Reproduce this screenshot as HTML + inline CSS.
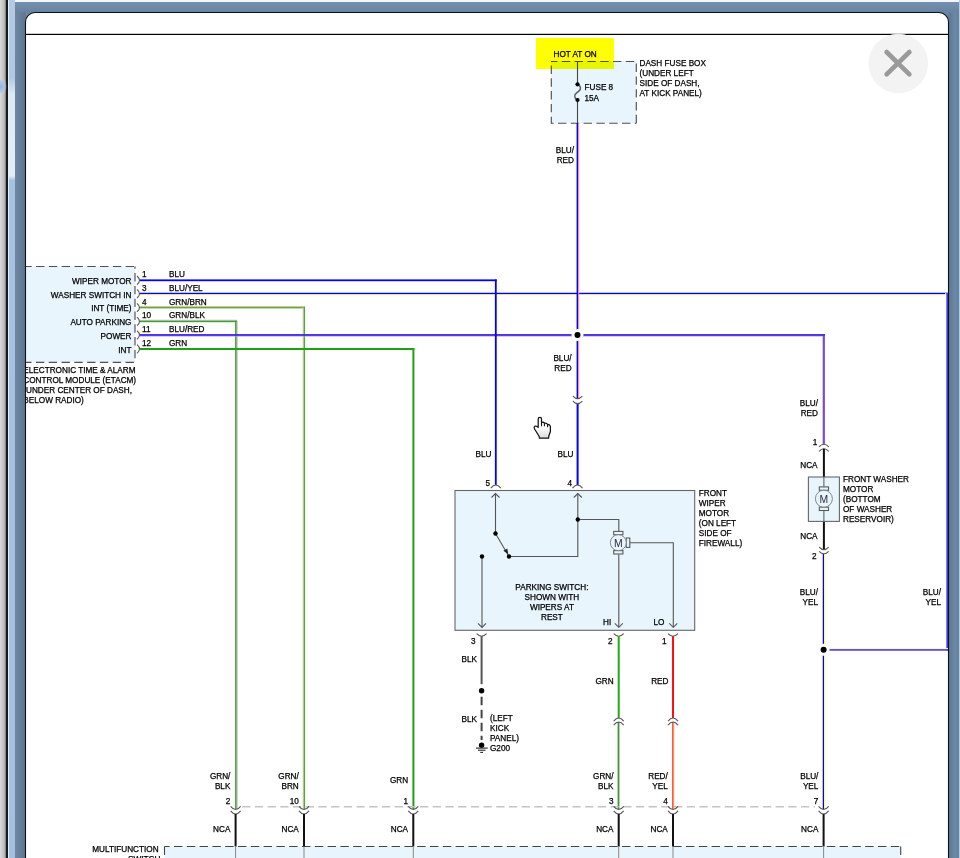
<!DOCTYPE html>
<html><head><meta charset="utf-8">
<style>
html,body{margin:0;padding:0;width:960px;height:858px;overflow:hidden;background:#fff}
svg{position:absolute;left:0;top:0;display:block}
text{font-family:"Liberation Sans",sans-serif;font-size:8.2px;fill:#000;stroke:#000;stroke-width:0.25px}
.e{text-anchor:end}
.m{text-anchor:middle}
</style></head><body>
<svg width="960" height="858" viewBox="0 0 960 858">
<defs>
<linearGradient id="lg" x1="0" x2="1" y1="0" y2="0">
<stop offset="0" stop-color="#dadadc"/><stop offset="0.55" stop-color="#c6c4c2"/><stop offset="0.85" stop-color="#a8a8a8"/><stop offset="1" stop-color="#6a6a6a"/>
</linearGradient>
<linearGradient id="lb" x1="0" x2="0" y1="0" y2="1">
<stop offset="0" stop-color="#b4cae2"/><stop offset="0.09" stop-color="#b0c8e0"/><stop offset="0.11" stop-color="#dfe9f3"/><stop offset="0.205" stop-color="#e4edf5"/><stop offset="0.21" stop-color="#a6c2de"/><stop offset="1" stop-color="#a4c0dc"/>
</linearGradient>
<radialGradient id="glow"><stop offset="0" stop-color="#8fb2e2"/><stop offset="0.6" stop-color="#a8c4e4" stop-opacity="0.7"/><stop offset="1" stop-color="#c8e0e0" stop-opacity="0"/></radialGradient>
<linearGradient id="sl" x1="0" x2="1" y1="0" y2="0"><stop offset="0" stop-color="#6d88a2"/><stop offset="1" stop-color="#5e7591"/></linearGradient>
<linearGradient id="sr" x1="0" x2="1" y1="0" y2="0"><stop offset="0" stop-color="#5e7591"/><stop offset="0.6" stop-color="#6c88a4"/><stop offset="1" stop-color="#6280a0"/></linearGradient>
<linearGradient id="st" x1="0" x2="0" y1="0" y2="1"><stop offset="0" stop-color="#7490b0"/><stop offset="1" stop-color="#6883a0"/></linearGradient>
</defs>

<rect x="551" y="61" width="85" height="62" fill="#e8f5fd"/>
<line x1="551" y1="61.5" x2="636.3" y2="61.5" stroke="#505050" stroke-width="1.15" stroke-dasharray="8.4 4.4" stroke-dashoffset="2.0"/>
<line x1="551" y1="123.2" x2="636.3" y2="123.2" stroke="#505050" stroke-width="1.15" stroke-dasharray="8.4 4.4" stroke-dashoffset="5.8"/>
<line x1="551.3" y1="61" x2="551.3" y2="123.2" stroke="#505050" stroke-width="1.15" stroke-dasharray="8.4 4.4" stroke-dashoffset="8.3"/>
<line x1="636.3" y1="61" x2="636.3" y2="123.2" stroke="#505050" stroke-width="1.15" stroke-dasharray="8.4 4.4" stroke-dashoffset="10.2"/>
<rect x="576.95" y="61" width="1.1" height="23.299999999999997" fill="#444"/>
<rect x="576.95" y="100" width="1.1" height="23" fill="#444"/>
<path d="M577.5 84.5 C580.8 85.5 581.6 89.2 578.8 91.2 L576.3 93.2 C573.8 95.2 574.3 98.6 577.5 100" fill="none" stroke="#5e5e5e" stroke-width="1.5"/>
<circle cx="577.5" cy="84.3" r="2.1" fill="#000"/>
<circle cx="577.5" cy="100" r="2.1" fill="#000"/>
<text x="584.5" y="90">FUSE 8</text>
<text x="584.5" y="101">15A</text>
<text x="639.5" y="66">DASH FUSE BOX</text>
<text x="639.5" y="76">(UNDER LEFT</text>
<text x="639.5" y="86">SIDE OF DASH,</text>
<text x="639.5" y="96">AT KICK PANEL)</text>
<rect x="536" y="38" width="78" height="31" fill="#ffff00" style="mix-blend-mode:multiply"/>
<text x="553.5" y="57">HOT AT ON</text>
<rect x="10" y="266.7" width="125" height="95.3" fill="#e8f5fd"/>
<line x1="10" y1="266.5" x2="135.3" y2="266.5" stroke="#505050" stroke-width="1.15" stroke-dasharray="8.4 4.4" stroke-dashoffset="12.3"/>
<line x1="10" y1="362.3" x2="135.3" y2="362.3" stroke="#505050" stroke-width="1.15" stroke-dasharray="8.4 4.4" stroke-dashoffset="12.5"/>
<line x1="135" y1="266.5" x2="135" y2="362.3" stroke="#505050" stroke-width="1.15" stroke-dasharray="8.4 4.4" stroke-dashoffset="6.2"/>
<text x="131.5" y="284.1" class="e">WIPER MOTOR</text>
<text x="142" y="276.6">1</text>
<text x="169" y="276.6">BLU</text>
<path d="M137 276.0 Q142 280.3 137 284.6" fill="none" stroke="#555" stroke-width="1.1"/>
<text x="131.5" y="297.5" class="e">WASHER SWITCH IN</text>
<text x="142" y="290.5">3</text>
<text x="169" y="290.5">BLU/YEL</text>
<path d="M137 289.4 Q142 293.7 137 298.0" fill="none" stroke="#555" stroke-width="1.1"/>
<text x="131.5" y="311.4" class="e">INT (TIME)</text>
<text x="142" y="304.6">4</text>
<text x="169" y="304.6">GRN/BRN</text>
<path d="M137 303.3 Q142 307.6 137 311.90000000000003" fill="none" stroke="#555" stroke-width="1.1"/>
<text x="131.5" y="325.2" class="e">AUTO PARKING</text>
<text x="142" y="318.3">10</text>
<text x="169" y="318.3">GRN/BLK</text>
<path d="M137 317.09999999999997 Q142 321.4 137 325.7" fill="none" stroke="#555" stroke-width="1.1"/>
<text x="131.5" y="338.8" class="e">POWER</text>
<text x="142" y="332.1">11</text>
<text x="169" y="332.1">BLU/RED</text>
<path d="M137 330.7 Q142 335.0 137 339.3" fill="none" stroke="#555" stroke-width="1.1"/>
<text x="131.5" y="352.8" class="e">INT</text>
<text x="142" y="346.0">12</text>
<text x="169" y="346.0">GRN</text>
<path d="M137 344.7 Q142 349.0 137 353.3" fill="none" stroke="#555" stroke-width="1.1"/>
<text x="23.3" y="373">ELECTRONIC TIME &amp; ALARM</text>
<text x="23.3" y="382.8">CONTROL MODULE (ETACM)</text>
<text x="23.3" y="392.7">(UNDER CENTER OF DASH,</text>
<text x="23.3" y="402.6">BELOW RADIO)</text>
<rect x="140" y="306.8" width="165" height="1.6" fill="#5aae3a"/>
<rect x="140" y="306.0" width="165" height="0.8" fill="#d8b898"/>
<rect x="303.34999999999997" y="306.8" width="1.7" height="502.2" fill="#52aa36"/>
<rect x="302.65" y="306.8" width="0.7" height="502.2" fill="#e4d0bc"/>
<rect x="140" y="320.59999999999997" width="96.80000000000001" height="1.6" fill="#38a428"/>
<rect x="140" y="319.79999999999995" width="96.80000000000001" height="0.8" fill="#a8a8a8"/>
<rect x="235.1" y="320.6" width="1.6" height="488.4" fill="#38a428"/>
<rect x="236.70000000000002" y="320.6" width="0.8" height="488.4" fill="#a8a8a8"/>
<rect x="140" y="348.0" width="274.3" height="2" fill="#22a014"/>
<rect x="412.4" y="348" width="2" height="461" fill="#22a014"/>
<rect x="140" y="292.75" width="808" height="1.3" fill="#0000ff"/>
<rect x="140" y="294.04999999999995" width="808" height="1.0" fill="#e4dca0"/>
<rect x="946.2" y="292.8" width="1.8" height="357.99999999999994" fill="#3a3aff"/>
<rect x="945.2" y="292.8" width="1.0" height="357.99999999999994" fill="#fbfbd8"/>
<rect x="823.6" y="649.0" width="124.39999999999998" height="1.8" fill="#5a50f0"/>
<rect x="823.6" y="648.0" width="124.39999999999998" height="1.0" fill="#ffff90"/>
<rect x="822.75" y="553.7" width="1.4" height="255.29999999999995" fill="#0000ff"/>
<rect x="824.1500000000001" y="553.7" width="1.1" height="255.29999999999995" fill="#ffff80"/>
<rect x="140" y="334.1" width="684.8" height="1.8" fill="#3a1ee4"/>
<rect x="140" y="335.9" width="684.8" height="0.6" fill="#c090d0"/>
<rect x="822.9" y="336.5" width="2.0" height="107.80000000000001" fill="#6a4ee8"/>
<rect x="822.1" y="336.5" width="0.8" height="107.80000000000001" fill="#eeb4bc"/>
<rect x="822.9" y="334.1" width="2.0" height="2.5" fill="#4a2ee6"/>
<rect x="140" y="279.40000000000003" width="356.7" height="1.8" fill="#0000ff"/>
<rect x="494.90000000000003" y="279.4" width="1.8" height="205.60000000000002" fill="#0000ff"/>
<rect x="576.6" y="123" width="1.6" height="275.7" fill="#0000ff"/>
<rect x="578.1999999999999" y="123" width="1.0" height="275.7" fill="#ff9080"/>
<rect x="576.6" y="403.6" width="2.0" height="81.39999999999998" fill="#0000ff"/>
<circle cx="577.5" cy="335" r="6" fill="#fff"/>
<circle cx="577.5" cy="335" r="3" fill="#000"/>
<path d="M572.85 396.2 Q577.6 401.2 582.35 396.2" fill="none" stroke="#555" stroke-width="1.1"/>
<path d="M572.85 401.1 Q577.6 406.1 582.35 401.1" fill="none" stroke="#555" stroke-width="1.1"/>
<text x="571.6" y="361" class="e">BLU/</text>
<text x="571.6" y="371" class="e">RED</text>
<text x="574" y="153" class="e">BLU/</text>
<text x="574" y="163" class="e">RED</text>
<text x="491.5" y="456.7" class="e">BLU</text>
<text x="573.5" y="456.7" class="e">BLU</text>
<text x="485.5" y="485.6">5</text>
<text x="567.5" y="485.6">4</text>
<path d="M490.8 488.2 Q495.8 481.8 500.8 488.2" fill="none" stroke="#555" stroke-width="1.1"/>
<path d="M572.5 488.2 Q577.5 481.8 582.5 488.2" fill="none" stroke="#555" stroke-width="1.1"/>
<rect x="455" y="490.5" width="239.7" height="139.8" fill="#e8f5fd" stroke="#666" stroke-width="1.1"/>
<g fill="none" stroke="#555" stroke-width="1.1">
<path d="M495.5 493.5 V533.5"/><path d="M491.5 497.5 L495.5 493.5 L499.5 497.5"/>
<path d="M495.5 533.5 L509 556.5"/>
<path d="M509 556.5 H577.8 V493.5"/><path d="M573.8 497.5 L577.8 493.5 L581.8 497.5"/>
<path d="M577.8 519.5 H618.8 V531.5"/>
<path d="M630 542.8 H673.3 V627.3"/><path d="M669.3 623.3 L673.3 627.3 L677.3 623.3"/>
<path d="M618.8 554.5 V627.3"/><path d="M614.8 623.3 L618.8 627.3 L622.8 623.3"/>
<path d="M482 556.5 V627.4"/><path d="M478 623.4 L482 627.4 L486 623.4"/>
</g>
<path d="M508.3 554.2 L503.4 550.7 L507.3 548.4 Z" fill="#222"/>
<circle cx="495.5" cy="533.5" r="2.2" fill="#000"/>
<circle cx="509" cy="556.5" r="2.2" fill="#000"/>
<circle cx="577.8" cy="519.5" r="2.2" fill="#000"/>
<circle cx="482" cy="556.5" r="2.2" fill="#000"/>
<g fill="#e8f5fd" stroke="#5a5a5a" stroke-width="1.1">
<rect x="613.6999999999999" y="531.4000000000001" width="9.2" height="3.4"/>
<rect x="613.6999999999999" y="550.6" width="9.2" height="3.4"/>
<rect x="626.1999999999999" y="538.0" width="3.6" height="9.4"/>
</g>
<circle cx="618.3" cy="542.7" r="8.0" fill="#e8f5fd" stroke="#7a7a7a" stroke-width="0.9"/>
<text class="m" x="618.3" y="546.6" style="font-size:10.4px;stroke-width:0;fill:#2a2a3a">M</text>
<text x="551.9" y="590.2" class="m">PARKING SWITCH:</text>
<text x="551.9" y="600.2" class="m">SHOWN WITH</text>
<text x="551.9" y="610.2" class="m">WIPERS AT</text>
<text x="551.9" y="620" class="m">REST</text>
<text x="603" y="625">HI</text>
<text x="653.4" y="625">LO</text>
<text x="698.8" y="496">FRONT</text>
<text x="698.8" y="506">WIPER</text>
<text x="698.8" y="516">MOTOR</text>
<text x="698.8" y="526">(ON LEFT</text>
<text x="698.8" y="536">SIDE OF</text>
<text x="698.8" y="546">FIREWALL)</text>
<path d="M476.6 633.6999999999999 Q481.6 638.9 486.6 633.6999999999999" fill="none" stroke="#555" stroke-width="1.1"/>
<path d="M613.7 633.6999999999999 Q618.7 638.9 623.7 633.6999999999999" fill="none" stroke="#555" stroke-width="1.1"/>
<path d="M668.0 633.6999999999999 Q673 638.9 678.0 633.6999999999999" fill="none" stroke="#555" stroke-width="1.1"/>
<text x="471" y="644">3</text>
<text x="608" y="644">2</text>
<text x="662" y="644">1</text>
<rect x="480.6" y="636" width="2" height="48.200000000000045" fill="#555"/>
<circle cx="481.6" cy="690.7" r="2.7" fill="#000"/>
<line x1="481.6" y1="696.8" x2="481.6" y2="740" stroke="#444" stroke-width="2" stroke-dasharray="8.4 4.6"/>
<circle cx="481.6" cy="745.3" r="2.7" fill="#000"/>
<g stroke="#333" stroke-width="1.2"><line x1="476" y1="748.1" x2="487.7" y2="748.1"/><line x1="478" y1="750.2" x2="485.4" y2="750.2"/><line x1="480.3" y1="752.4" x2="483" y2="752.4"/></g>
<text x="461.5" y="662">BLK</text>
<text x="461.5" y="721.7">BLK</text>
<text x="490" y="721">(LEFT</text>
<text x="490" y="731">KICK</text>
<text x="490" y="741">PANEL)</text>
<text x="490" y="751">G200</text>
<rect x="617.7" y="636" width="2" height="82" fill="#22aa14"/>
<rect x="617.6" y="722" width="1.6" height="87" fill="#30a020"/>
<rect x="619.1999999999999" y="722" width="0.8" height="87" fill="#c0b8c8"/>
<rect x="672.0" y="636" width="2" height="82" fill="#ff1010"/>
<rect x="672.0" y="722" width="1.8" height="87" fill="#ff5a3c"/>
<rect x="673.8" y="722" width="0.6" height="87" fill="#ffd890"/>
<path d="M613.7 721.2 Q618.7 714.8 623.7 721.2" fill="none" stroke="#555" stroke-width="1.1"/>
<path d="M613.7 725.2 Q618.7 718.8 623.7 725.2" fill="none" stroke="#555" stroke-width="1.1"/>
<path d="M668.0 721.2 Q673 714.8 678.0 721.2" fill="none" stroke="#555" stroke-width="1.1"/>
<path d="M668.0 725.2 Q673 718.8 678.0 725.2" fill="none" stroke="#555" stroke-width="1.1"/>
<text x="595.5" y="684">GRN</text>
<text x="651.2" y="684">RED</text>
<path d="M819.0 446.8 Q823.9 441.8 828.8 446.8" fill="none" stroke="#555" stroke-width="1.1"/>
<path d="M819.0 451.40000000000003 Q823.9 446.2 828.8 451.40000000000003" fill="none" stroke="#555" stroke-width="1.1"/>
<text x="818" y="406" class="e">BLU/</text>
<text x="818" y="416" class="e">RED</text>
<text x="812.8" y="445">1</text>
<rect x="822.9" y="448.8" width="2" height="100.90000000000003" fill="#111"/>
<text x="817.6" y="468" class="e">NCA</text>
<rect x="808.4" y="477" width="31" height="44.4" fill="#e8f5fd" stroke="#666" stroke-width="1.1"/>
<rect x="823.4" y="477" width="1" height="44.39999999999998" fill="#555"/>
<g fill="#e8f5fd" stroke="#5a5a5a" stroke-width="1.1">
<rect x="819.3" y="486.9" width="9.2" height="3.4"/>
<rect x="819.3" y="507.09999999999997" width="9.2" height="3.4"/>
</g>
<circle cx="823.9" cy="498.7" r="8.5" fill="#e8f5fd" stroke="#7a7a7a" stroke-width="0.9"/>
<text class="m" x="823.9" y="502.59999999999997" style="font-size:10.4px;stroke-width:0;fill:#2a2a3a">M</text>
<text x="843" y="481.5">FRONT WASHER</text>
<text x="843" y="491.5">MOTOR</text>
<text x="843" y="501.5">(BOTTOM</text>
<text x="843" y="511.5">OF WASHER</text>
<text x="843" y="521.5">RESERVOIR)</text>
<text x="817.6" y="539" class="e">NCA</text>
<path d="M819.15 547.1 Q823.9 552.3000000000001 828.65 547.1" fill="none" stroke="#555" stroke-width="1.1"/>
<path d="M819.15 551.3000000000001 Q823.9 556.1 828.65 551.3000000000001" fill="none" stroke="#555" stroke-width="1.1"/>
<text x="812" y="558.8">2</text>
<text x="818" y="594.7" class="e">BLU/</text>
<text x="818" y="604.7" class="e">YEL</text>
<text x="941" y="594.7" class="e">BLU/</text>
<text x="941" y="604.7" class="e">YEL</text>
<circle cx="823.6" cy="649.7" r="6" fill="#fff"/>
<circle cx="823.6" cy="649.7" r="3" fill="#000"/>
<line x1="241" y1="806.8" x2="815" y2="806.8" stroke="#c4c4c4" stroke-width="1.5" stroke-dasharray="8.3 4.4" stroke-dashoffset="-1.2"/>
<rect x="164.5" y="846.5" width="736.2" height="40" fill="#e8f5fd"/>
<line x1="164.5" y1="846.5" x2="901" y2="846.5" stroke="#444" stroke-width="1.1" stroke-dasharray="8.4 4.4" stroke-dashoffset="3.3"/>
<line x1="900.7" y1="846.5" x2="900.7" y2="900" stroke="#444" stroke-width="1.1" stroke-dasharray="8.4 4.4" stroke-dashoffset="0"/>
<line x1="164.5" y1="846.5" x2="164.5" y2="900" stroke="#444" stroke-width="1.1" stroke-dasharray="8.4 4.4" stroke-dashoffset="0"/>
<path d="M230.6 806.3 Q235.6 812.7 240.6 806.3" fill="none" stroke="#555" stroke-width="1.1"/>
<path d="M230.6 810.8 Q235.6 817.2 240.6 810.8" fill="none" stroke="#555" stroke-width="1.1"/>
<rect x="234.6" y="814" width="2" height="32.5" fill="#111"/>
<rect x="235.1" y="846.5" width="1" height="11.5" fill="#888"/>
<text x="230.4" y="778.5" class="e">GRN/</text>
<text x="230.4" y="789" class="e">BLK</text>
<text x="230.4" y="804" class="e">2</text>
<text x="230.4" y="831.6" class="e">NCA</text>
<path d="M299.0 806.3 Q304 812.7 309.0 806.3" fill="none" stroke="#555" stroke-width="1.1"/>
<path d="M299.0 810.8 Q304 817.2 309.0 810.8" fill="none" stroke="#555" stroke-width="1.1"/>
<rect x="303.0" y="814" width="2" height="32.5" fill="#111"/>
<rect x="303.5" y="846.5" width="1" height="11.5" fill="#888"/>
<text x="298.8" y="778.5" class="e">GRN/</text>
<text x="298.8" y="789" class="e">BRN</text>
<text x="298.8" y="804" class="e">10</text>
<text x="298.8" y="831.6" class="e">NCA</text>
<path d="M408.3 806.3 Q413.3 812.7 418.3 806.3" fill="none" stroke="#555" stroke-width="1.1"/>
<path d="M408.3 810.8 Q413.3 817.2 418.3 810.8" fill="none" stroke="#555" stroke-width="1.1"/>
<rect x="412.3" y="814" width="2" height="32.5" fill="#111"/>
<rect x="412.8" y="846.5" width="1" height="11.5" fill="#888"/>
<text x="408.1" y="783" class="e">GRN</text>
<text x="408.1" y="804" class="e">1</text>
<text x="408.1" y="831.6" class="e">NCA</text>
<path d="M613.7 806.3 Q618.7 812.7 623.7 806.3" fill="none" stroke="#555" stroke-width="1.1"/>
<path d="M613.7 810.8 Q618.7 817.2 623.7 810.8" fill="none" stroke="#555" stroke-width="1.1"/>
<rect x="617.7" y="814" width="2" height="32.5" fill="#111"/>
<rect x="618.2" y="846.5" width="1" height="11.5" fill="#888"/>
<text x="613.5" y="778.5" class="e">GRN/</text>
<text x="613.5" y="789" class="e">BLK</text>
<text x="613.5" y="804" class="e">3</text>
<text x="613.5" y="831.6" class="e">NCA</text>
<path d="M668.0 806.3 Q673 812.7 678.0 806.3" fill="none" stroke="#555" stroke-width="1.1"/>
<path d="M668.0 810.8 Q673 817.2 678.0 810.8" fill="none" stroke="#555" stroke-width="1.1"/>
<rect x="672.0" y="814" width="2" height="32.5" fill="#111"/>
<rect x="672.5" y="846.5" width="1" height="11.5" fill="#888"/>
<text x="667.8" y="778.5" class="e">RED/</text>
<text x="667.8" y="789" class="e">YEL</text>
<text x="667.8" y="804" class="e">4</text>
<text x="667.8" y="831.6" class="e">NCA</text>
<path d="M818.6 806.3 Q823.6 812.7 828.6 806.3" fill="none" stroke="#555" stroke-width="1.1"/>
<path d="M818.6 810.8 Q823.6 817.2 828.6 810.8" fill="none" stroke="#555" stroke-width="1.1"/>
<rect x="822.6" y="814" width="2" height="32.5" fill="#111"/>
<rect x="823.1" y="846.5" width="1" height="11.5" fill="#888"/>
<text x="818.4" y="778.5" class="e">BLU/</text>
<text x="818.4" y="789" class="e">YEL</text>
<text x="818.4" y="804" class="e">7</text>
<text x="818.4" y="831.6" class="e">NCA</text>
<text x="92.3" y="852">MULTIFUNCTION</text>
<text x="160.4" y="862" class="e">SWITCH</text>
<defs><linearGradient id="hg" x1="0" x2="0" y1="0" y2="1"><stop offset="0.45" stop-color="#fff"/><stop offset="1" stop-color="#dcdcdc"/></linearGradient></defs>
<g transform="translate(528 410)"><path d="M10.2 17.4 V9 Q10.2 7.3 11.85 7.3 Q13.5 7.3 13.5 9 V12.4 Q15.3 11.6 16.4 13.2 Q18.4 12.6 19.6 14.4 Q21.6 14.2 22.4 16.4 V21.5 L20.8 26 L20.6 28.2 H11.4 L11.2 26.5 L6.6 19 Q5.6 17.2 6.8 16.3 Q8.4 15.4 10.2 17.4 Z" fill="url(#hg)" stroke="#111" stroke-width="1.25" stroke-linejoin="round"/>
<path d="M13.5 12.4 V16.3 M16.4 13.3 V16.3 M19.6 14.4 V17.3" stroke="#111" stroke-width="1.1" fill="none"/></g>
<path fill-rule="evenodd" fill="#6b87a5" d="M15 2 H960 V858 H15 Z M35.0 12.5 H939.0 A9.5 9.5 0 0 1 948.5 22.0 V858 H25.5 V22.0 A9.5 9.5 0 0 1 35.0 12.5 Z"/>
<rect x="15" y="2" width="945" height="10.5" fill="url(#st)"/>
<rect x="15" y="12.5" width="10.5" height="846" fill="url(#sl)"/>
<rect x="948.5" y="12.5" width="10.5" height="846" fill="url(#sr)"/>
<path d="M25.5 858 V22.0 A9.5 9.5 0 0 1 35.0 12.5 H939.0 A9.5 9.5 0 0 1 948.5 22.0 V858" fill="none" stroke="#0c1218" stroke-width="1.1"/>
<rect x="0" y="0" width="960" height="2" fill="#f4f6f8"/>
<rect x="959" y="0" width="1" height="858" fill="#b4cae0"/>
<rect x="0" y="0" width="6" height="858" fill="url(#lg)"/>
<rect x="6" y="0" width="2" height="858" fill="#151a1f"/>
<rect x="8" y="0" width="1" height="858" fill="#e6eff8"/>
<rect x="9" y="0" width="6" height="858" fill="url(#lb)"/>
<ellipse cx="1" cy="86.5" rx="6" ry="9" fill="url(#glow)"/>
<rect x="26" y="33.8" width="922" height="1.2" fill="#000"/>
<circle cx="898.3" cy="63.5" r="29.8" fill="#f2f2f2" fill-opacity="0.95"/>
<path d="M886.6 52 L909.4 74.4 M909.4 52 L886.6 74.4" stroke="#9a9a9a" stroke-width="4.6" stroke-linecap="round"/>
</svg>
</body></html>
